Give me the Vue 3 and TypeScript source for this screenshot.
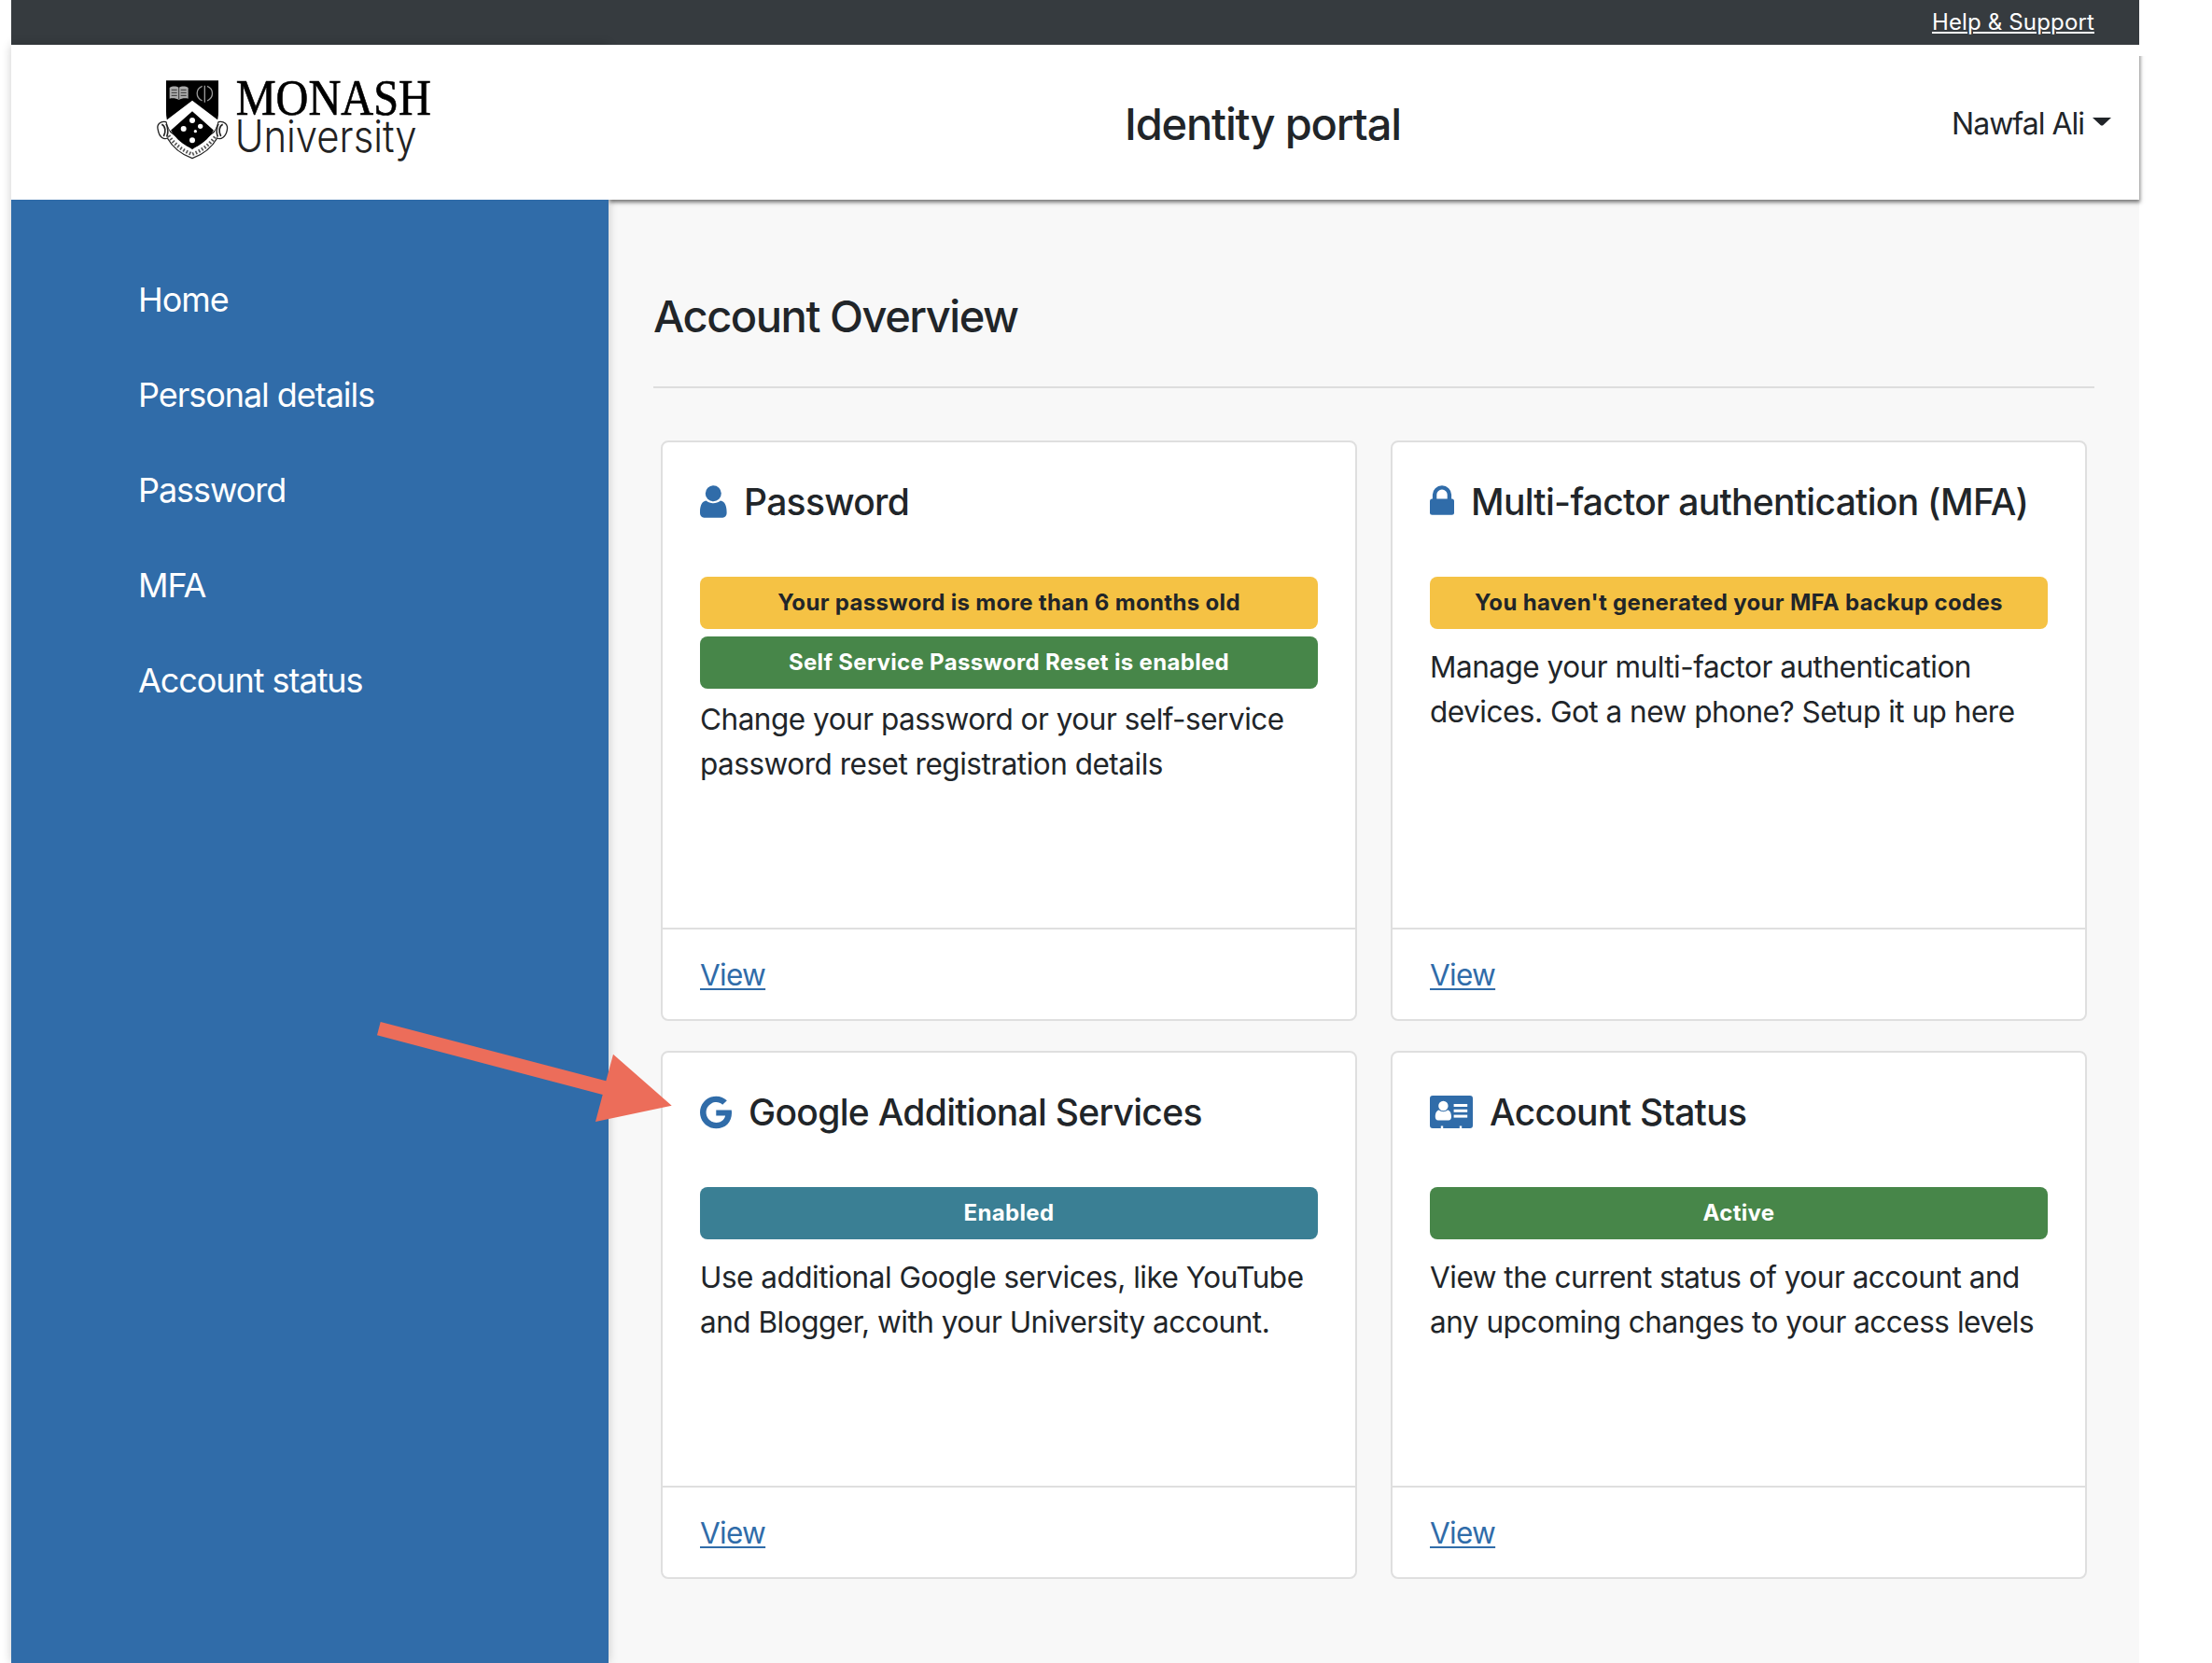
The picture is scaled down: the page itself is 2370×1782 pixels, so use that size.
<script setup lang="ts">
type IconName = 'user' | 'lock' | 'google' | 'card'
type Tone = 'warning' | 'success' | 'info'

interface Badge {
  text: string
  tone: Tone
}

interface Card {
  icon: IconName
  title: string
  badges: Badge[]
  lines: string[]
}

const navItems: string[] = ['Home', 'Personal details', 'Password', 'MFA', 'Account status']

const cards: Card[] = [
  {
    icon: 'user',
    title: 'Password',
    badges: [
      { text: 'Your password is more than 6 months old', tone: 'warning' },
      { text: 'Self Service Password Reset is enabled', tone: 'success' },
    ],
    lines: ['Change your password or your self-service', 'password reset registration details'],
  },
  {
    icon: 'lock',
    title: 'Multi-factor authentication (MFA)',
    badges: [{ text: "You haven't generated your MFA backup codes", tone: 'warning' }],
    lines: ['Manage your multi-factor authentication', 'devices. Got a new phone? Setup it up here'],
  },
  {
    icon: 'google',
    title: 'Google Additional Services',
    badges: [{ text: 'Enabled', tone: 'info' }],
    lines: ['Use additional Google services, like YouTube', 'and Blogger, with your University account.'],
  },
  {
    icon: 'card',
    title: 'Account Status',
    badges: [{ text: 'Active', tone: 'success' }],
    lines: ['View the current status of your account and', 'any upcoming changes to your access levels'],
  },
]
</script>

<template>
  <div class="page">
    <div class="topbar"><a class="help">Help &amp; Support</a></div>
    <div class="columns">
      <aside class="side">
        <div class="brand">
          <svg class="logo" viewBox="0 0 990 360" width="330" height="120">
            <!-- ribbon around the shield -->
            <path d="M84 182C66 178 52 190 58 208C62 232 78 240 88 234C104 262 132 286 168 299C204 286 232 262 248 234C260 240 276 230 280 208C284 190 270 178 252 182L238 214L168 268L98 214Z" fill="#fff" stroke="#222" stroke-width="4" />
            <path d="M70 190C82 196 84 214 76 228M84 188C92 204 92 214 86 230M266 190C254 196 252 214 260 228M252 188C244 204 244 214 250 230" fill="none" stroke="#222" stroke-width="5" />
            <path d="M92 226C112 256 138 274 168 286C198 274 224 256 244 226" fill="none" stroke="#555" stroke-width="11" stroke-dasharray="5 6" />
            <!-- shield -->
            <path d="M84 49H252V150C252 206 214 250 168 268C122 250 84 206 84 150Z" fill="#000" />
            <path d="M168 113L251 176C249 190 244 201 239 211L168 148L97 211C92 201 87 190 85 176Z" fill="#fff" />
            <path d="M95 72C105 66 117 67 125 72C133 67 145 66 155 72V107C145 104 133 106 125 111C117 106 105 104 95 107Z" fill="#aaa" />
            <path d="M125 72V109M101 79H119M101 88H119M101 97H119M131 79H149M131 88H149M131 97H149" stroke="#333" stroke-width="3" />
            <path d="M200 67C178 76 178 104 200 114M216 67C238 76 238 104 216 114M208 65V119" fill="none" stroke="#999" stroke-width="4" />
            <g fill="#fff">
              <circle cx="168" cy="177" r="9" />
              <circle cx="140" cy="204" r="9" />
              <circle cx="194" cy="196" r="8" />
              <circle cx="178" cy="212" r="5" />
              <circle cx="168" cy="241" r="9" />
            </g>
            <text class="word-top" x="308" y="158" textLength="628" lengthAdjust="spacingAndGlyphs">MONASH</text>
            <text class="word-bottom" x="305" y="280" textLength="585" lengthAdjust="spacingAndGlyphs">University</text>
          </svg>
        </div>
        <nav class="nav">
          <a v-for="item in navItems" :key="item" class="nav-item">{{ item }}</a>
        </nav>
      </aside>

      <div class="main">
        <header class="header">
          <div class="portal">Identity portal</div>
          <div class="user">
            <span class="user-name">Nawfal Ali</span>
            <svg class="caret" width="20" height="9" viewBox="0 0 20 9"><path d="M0 0H20L11.5 8Q10 9 8.500 8Z" fill="#212529" /></svg>
          </div>
        </header>
        <main class="content">
          <h1 class="heading">Account Overview</h1>
          <div class="cards">
            <section v-for="card in cards" :key="card.title" class="card">
              <div class="body">
                <h2 class="title">
                  <svg v-if="card.icon === 'user'" class="icon" width="29" height="35" viewBox="0 0 29 35">
                    <circle cx="14.3" cy="8.700" r="8.500" />
                    <path d="M6.600 16.600C9 18.600 11.500 19.300 14.300 19.300S19.600 18.600 22 16.600C26.500 17.200 28.600 22 28.600 28.500V30C28.600 32.700 26.800 34.700 24.300 34.700H4.300C1.800 34.700 0 32.700 0 30V28.500C0 22 2 17.200 6.600 16.600Z" />
                  </svg>
                  <svg v-else-if="card.icon === 'lock'" class="icon" width="26" height="35" viewBox="0 0 26 35">
                    <path d="M2.900 16V10A10.100 9.700 0 0 1 23.100 10V16H18.700V10A5.700 5.400 0 0 0 7.300 10V16Z" />
                    <rect x="0" y="14.500" width="26" height="17.300" rx="2.500" />
                  </svg>
                  <svg v-else-if="card.icon === 'google'" class="icon" width="34" height="36" viewBox="0 0 488 512">
                    <path d="M488 261.8C488 403.300 391.100 504 248 504 110.800 504 0 393.200 0 256S110.800 8 248 8c66.800 0 123 24.500 166.300 64.900l-67.500 64.900C258.500 52.600 94.300 116.600 94.300 256c0 86.500 69.100 156.600 153.700 156.600 98.200 0 135-70.400 140.800-106.900H248v-85.300h236.100c2.300 12.700 3.900 24.900 3.900 41.400z" />
                  </svg>
                  <svg v-else class="icon" width="46" height="35" viewBox="0 0 46 35">
                    <path d="M3 0H43Q46 0 46 3V32Q46 35 43 35H34.200V32.500H31.800V35H14.200V32.500H11.800V35H3Q0 35 0 32V3Q0 0 3 0Z" />
                    <g fill="#fff">
                      <circle cx="14.400" cy="11" r="5.200" />
                      <path d="M9.800 15.600C12.500 17.800 16.300 17.800 19 15.600C22 16.200 23 19.500 23 23C23 25 21.800 26.400 20 26.400H8.800C7 26.400 5.800 25 5.800 23C5.800 19.500 6.800 16.200 9.800 15.600Z" />
                      <rect x="25.600" y="9" width="14.600" height="3" />
                      <rect x="25.600" y="14.800" width="14.600" height="3" />
                      <rect x="25.600" y="20.600" width="14.600" height="3" />
                    </g>
                  </svg>
                  <span>{{ card.title }}</span>
                </h2>
                <div class="badges">
                  <div v-for="badge in card.badges" :key="badge.text" :class="['badge', badge.tone]">{{ badge.text }}</div>
                </div>
                <p :class="['text', { tight: card.badges.length > 1 }]">
                  <span v-for="line in card.lines" :key="line" class="line">{{ line }}</span>
                </p>
              </div>
              <div class="footer"><a class="view">View</a></div>
            </section>
          </div>
        </main>
      </div>
    </div>

    <svg class="arrow" width="320" height="112" viewBox="402 1092 320 112">
      <path d="M407.700 1095L649.300 1158.300L657 1129.700L719.700 1184.700L638 1202L645.700 1173L404 1109.300Z" fill="#ec6d5a" />
    </svg>
  </div>
</template>

<style>
html,
body {
  margin: 0;
  background: #fff;
  overflow: hidden;
}
</style>

<style scoped>
.page {
  position: relative;
  box-sizing: border-box;
  width: 2370px;
  height: 1782px;
  padding: 0 78px 0 12px;
  overflow: hidden;
  display: flex;
  flex-direction: column;
  font-family: Inter, 'Liberation Sans', sans-serif;
  color: #212529;
}
.topbar {
  height: 48px;
  background: #363b3f;
  display: flex;
  align-items: center;
  justify-content: flex-end;
  padding-right: 48px;
}
.help {
  font-size: 24px;
  line-height: 48px;
  letter-spacing: 0.15px;
  color: #fff;
  text-decoration: underline;
  text-decoration-thickness: 2px;
  text-underline-offset: 2px;
}
.columns {
  flex: 1;
  display: flex;
  min-height: 0;
}
.side {
  position: relative;
  z-index: 2;
  width: 640px;
  background: #306ca9;
  box-shadow: 0 0 10px rgba(0, 0, 0, 0.2);
}
.brand {
  box-sizing: border-box;
  height: 166px;
  padding: 22px 0 0 138px;
  background: #fff;
}
.logo {
  display: block;
  overflow: visible;
}
.word-top {
  font-family: 'Liberation Serif', serif;
  font-size: 164px;
  stroke: #000;
  stroke-width: 2;
}
.word-bottom {
  font-family: Inter, sans-serif;
  font-weight: 300;
  font-size: 142px;
  fill: #222;
}
.nav {
  padding: 56px 0 0 136px;
  display: flex;
  flex-direction: column;
}
.nav-item {
  font-size: 36px;
  line-height: 102px;
  letter-spacing: -1.05px;
  color: #fff;
}
.main {
  flex: 1;
  display: flex;
  flex-direction: column;
  background: #f8f8f8;
}
.header {
  position: relative;
  z-index: 3;
  box-sizing: border-box;
  height: 166px;
  padding: 2px 30px 0 553px;
  background: #fff;
  box-shadow: 1px 3px 4px rgba(0, 0, 0, 0.5);
  clip-path: polygon(0 0, 100% 0, 100% 12px, calc(100% + 10px) 12px, calc(100% + 10px) calc(100% + 12px), 0 calc(100% + 12px));
  display: flex;
  align-items: center;
  justify-content: space-between;
}
.portal {
  font-size: 47px;
  font-weight: 500;
  letter-spacing: -1.16px;
}
.user {
  display: flex;
  align-items: center;
  gap: 9px;
  font-size: 32px;
}
.user-name {
  letter-spacing: -1px;
}
.caret {
  margin-top: -3px;
}
.content {
  padding: 96px 48px 0;
}
.heading {
  margin: 0;
  height: 104px;
  border-bottom: 2px solid #dedede;
  font-size: 47px;
  line-height: 58px;
  font-weight: 500;
  letter-spacing: -1.46px;
}
.cards {
  margin: 56px 8px 0;
  display: grid;
  grid-template-columns: 746px 746px;
  grid-template-rows: 622px 566px;
  gap: 32px 36px;
}
.card {
  box-sizing: border-box;
  border: 2px solid #dfdfdf;
  border-radius: 8px;
  background: #fff;
  display: flex;
  flex-direction: column;
}
.body {
  flex: 1;
  padding: 40px 40px 0;
}
.title {
  margin: 0;
  height: 48px;
  display: flex;
  align-items: center;
  gap: 18px;
  font-size: 39px;
  line-height: 48px;
  font-weight: 500;
  letter-spacing: -0.7px;
  white-space: nowrap;
}
.icon {
  flex: none;
  margin-bottom: 1px;
  fill: #306ca9;
}
.badges {
  margin-top: 56px;
  display: flex;
  flex-direction: column;
  gap: 8px;
}
.badge {
  height: 56px;
  border-radius: 8px;
  text-align: center;
  font-size: 24px;
  line-height: 55px;
  font-weight: 700;
  letter-spacing: 0.33px;
  color: #fff;
}
.warning {
  background: #f5c244;
  color: #212529;
}
.success {
  background: #478649;
}
.info {
  background: #3a7f94;
}
.text {
  margin: 17px 0 0;
  font-size: 31.5px;
  line-height: 48px;
  letter-spacing: -0.49px;
}
.tight {
  margin-top: 9px;
}
.line {
  display: block;
  white-space: nowrap;
}
.footer {
  height: 96px;
  border-top: 2px solid #dfdfdf;
  padding-left: 40px;
  line-height: 98px;
  font-size: 31.5px;
}
.view {
  color: #306ca9;
  letter-spacing: -0.7px;
  text-decoration: underline;
  text-decoration-thickness: 2px;
  text-underline-offset: 3px;
}
.arrow {
  position: absolute;
  left: 402px;
  top: 1092px;
  z-index: 5;
}
</style>
